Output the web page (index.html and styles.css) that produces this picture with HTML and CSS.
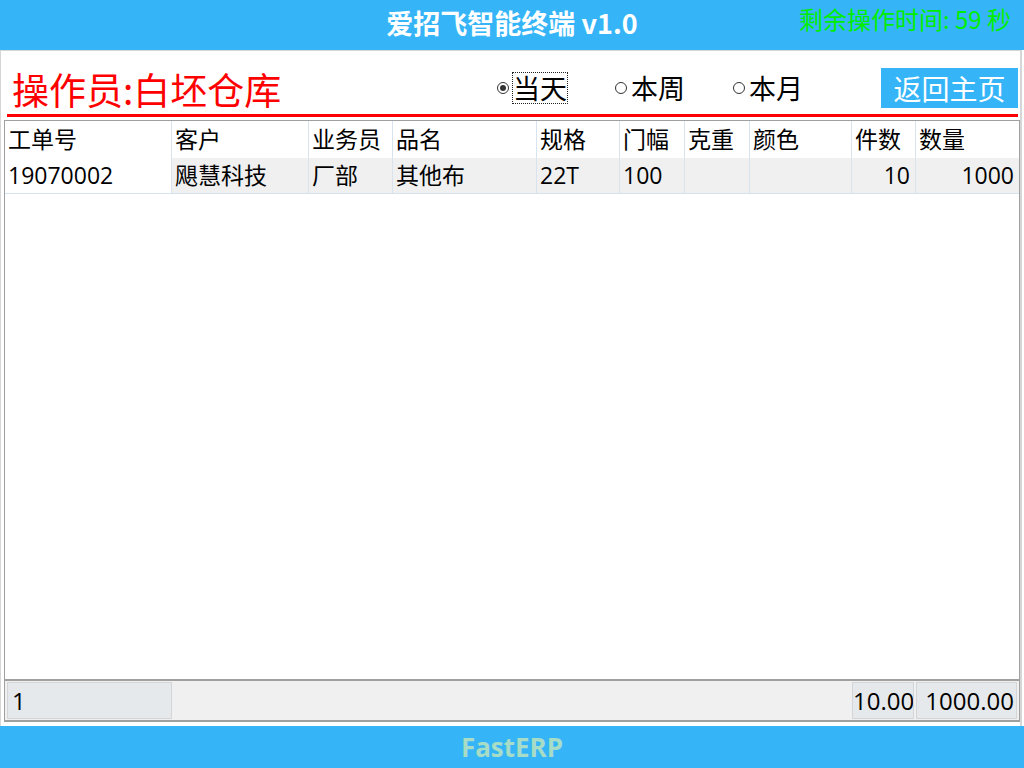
FILE: index.html
```html
<!DOCTYPE html>
<html lang="zh-CN">
<head>
    <meta charset="UTF-8">
    <meta name="viewport" content="width=device-width, initial-scale=1.0">
    <title>爱招飞智能终端</title>
    <link rel="stylesheet" href="styles.css">
</head>
<body>
    <div class="app">
        <div class="title-bar">
            <div></div>
            <div class="app-title">爱招飞智能终端 v1.0</div>
            <div class="countdown">剩余操作时间: 59 秒</div>
        </div>

        <div class="main-panel">
            <div class="panel-head">
                <div class="operator">操作员:白坯仓库</div>
                <div class="period-options">
                    <label class="period checked"><span class="dot"></span><span class="period-text focused">当天</span></label>
                    <label class="period"><span class="dot"></span><span class="period-text">本周</span></label>
                    <label class="period"><span class="dot"></span><span class="period-text">本月</span></label>
                </div>
                <button class="home-btn">返回主页</button>
            </div>
            <div class="red-rule"></div>

            <div class="grid">
                <div class="grid-row grid-header">
                    <div class="cell">工单号</div>
                    <div class="cell">客户</div>
                    <div class="cell">业务员</div>
                    <div class="cell">品名</div>
                    <div class="cell">规格</div>
                    <div class="cell">门幅</div>
                    <div class="cell">克重</div>
                    <div class="cell">颜色</div>
                    <div class="cell">件数</div>
                    <div class="cell">数量</div>
                </div>
                <div class="grid-row grid-data">
                    <div class="cell current">19070002</div>
                    <div class="cell">飓慧科技</div>
                    <div class="cell">厂部</div>
                    <div class="cell">其他布</div>
                    <div class="cell">22T</div>
                    <div class="cell">100</div>
                    <div class="cell"></div>
                    <div class="cell"></div>
                    <div class="cell num">10</div>
                    <div class="cell num">1000</div>
                </div>
                <div class="grid-empty"></div>
                <div class="grid-summary">
                    <div class="sum-cell sum-count">1</div>
                    <div class="sum-cell sum-pieces">10.00</div>
                    <div class="sum-cell sum-qty">1000.00</div>
                </div>
            </div>
        </div>

        <div class="status-bar">FastERP</div>
    </div>
</body>
</html>
```

FILE: styles.css
```css
* {
    box-sizing: border-box;
}

body {
    margin: 0;
    background-color: #fff;
    font-family: "Noto Sans CJK SC", sans-serif;
}

.app {
    display: flex;
    flex-direction: column;
    width: 1024px;
    height: 768px;
}

/* top title bar */
.title-bar {
    height: 50px;
    background-color: #35b5f8;
    display: grid;
    grid-template-columns: 1fr auto 1fr;
    align-items: center;
}

.app-title {
    color: #fff;
    font-size: 27px;
    font-weight: bold;
    line-height: 34px;
    margin-top: -5px;
}

.countdown {
    justify-self: end;
    align-self: start;
    margin-top: 4px;
    padding-right: 13px;
    color: #00ee00;
    font-size: 24px;
    line-height: 30px;
}

/* main panel */
.main-panel {
    height: 676px;
    margin-right: 2px;
    border: 1px solid #d6d6d6;
    border-right-width: 2px;
    border-bottom: none;
}

.panel-head {
    display: flex;
    align-items: center;
    padding: 17px 2px 6px 11px;
    height: 63px;
}

.operator {
    flex: 0 0 485px;
    color: #ff0000;
    font-size: 37px;
    line-height: 40px;
    margin-top: 2px;
}

.period-options {
    display: flex;
    align-items: center;
}

.period {
    display: flex;
    align-items: center;
    margin-right: 47px;
}

.dot {
    width: 12px;
    height: 12px;
    border: 1px solid #333;
    border-radius: 50%;
    background-color: #fff;
    margin-right: 3px;
    position: relative;
}

.period.checked .dot::after {
    content: "";
    position: absolute;
    top: 2px;
    left: 2px;
    width: 6px;
    height: 6px;
    border-radius: 50%;
    background-color: #333;
}

.period-text {
    font-size: 27px;
    line-height: 30px;
    color: #000;
    border: 1px solid transparent;
}

.period-text.focused {
    border: 1px dotted #222;
}

.home-btn {
    margin-left: auto;
    width: 137px;
    height: 40px;
    padding: 0;
    border: none;
    background-color: #35b5f8;
    color: #fff;
    font-family: "Noto Sans CJK SC", sans-serif;
    font-size: 28px;
    line-height: 40px;
}

.red-rule {
    height: 3px;
    margin: 0 2px 3px 6px;
    background-color: #ff0000;
}

/* data grid */
.grid {
    height: 602px;
    margin-left: 3px;
    border: 1px solid #a0a0a0;
    border-bottom: none;
    display: flex;
    flex-direction: column;
    font-family: "Open Sans", "Noto Sans CJK SC", sans-serif;
}

.grid-row,
.grid-summary {
    display: grid;
    grid-template-columns: 167px 137px 84px 144px 83px 65px 65px 102px 64px 1fr;
}

.cell {
    padding: 0 4px 0 3px;
    border-right: 1px solid #d8e3ee;
    font-size: 23px;
    white-space: nowrap;
    overflow: hidden;
    color: #000;
}

.cell:last-child {
    border-right: none;
}

.grid-header .cell {
    height: 37px;
    line-height: 37px;
}

.grid-data {
    background-color: #f0f0f0;
    border-bottom: 1px solid #d5e1ee;
}

.grid-data .cell {
    height: 35px;
    line-height: 35px;
}

.grid-data .cell.current {
    background-color: #fff;
}

.cell.num {
    text-align: right;
    padding-right: 5px;
}

.grid-empty {
    flex: 1;
}

.grid-summary {
    height: 43px;
    border-top: 2px solid #a0a0a0;
    border-bottom: 2px solid #a0a0a0;
    background-color: #f0f0f0;
}

.sum-cell {
    height: 37px;
    margin-top: 1px;
    background-color: #e6e9eb;
    border: 1px solid #d3d6d9;
    font-size: 24px;
    line-height: 35px;
    white-space: nowrap;
    overflow: hidden;
    color: #000;
}

.sum-count {
    grid-column: 1;
    margin-left: 2px;
    padding-left: 4px;
}

.sum-pieces {
    grid-column: 9;
    margin-right: 2px;
    text-align: right;
    padding-right: 1px;
}

.sum-qty {
    grid-column: 10;
    margin-right: 2px;
    text-align: right;
    padding-right: 2px;
}

/* bottom status bar */
.status-bar {
    height: 42px;
    margin-top: auto;
    background-color: #35b5f8;
    color: #a7dcc6;
    font-family: "Open Sans", sans-serif;
    font-weight: bold;
    font-size: 26px;
    line-height: 42px;
    text-align: center;
}
```
